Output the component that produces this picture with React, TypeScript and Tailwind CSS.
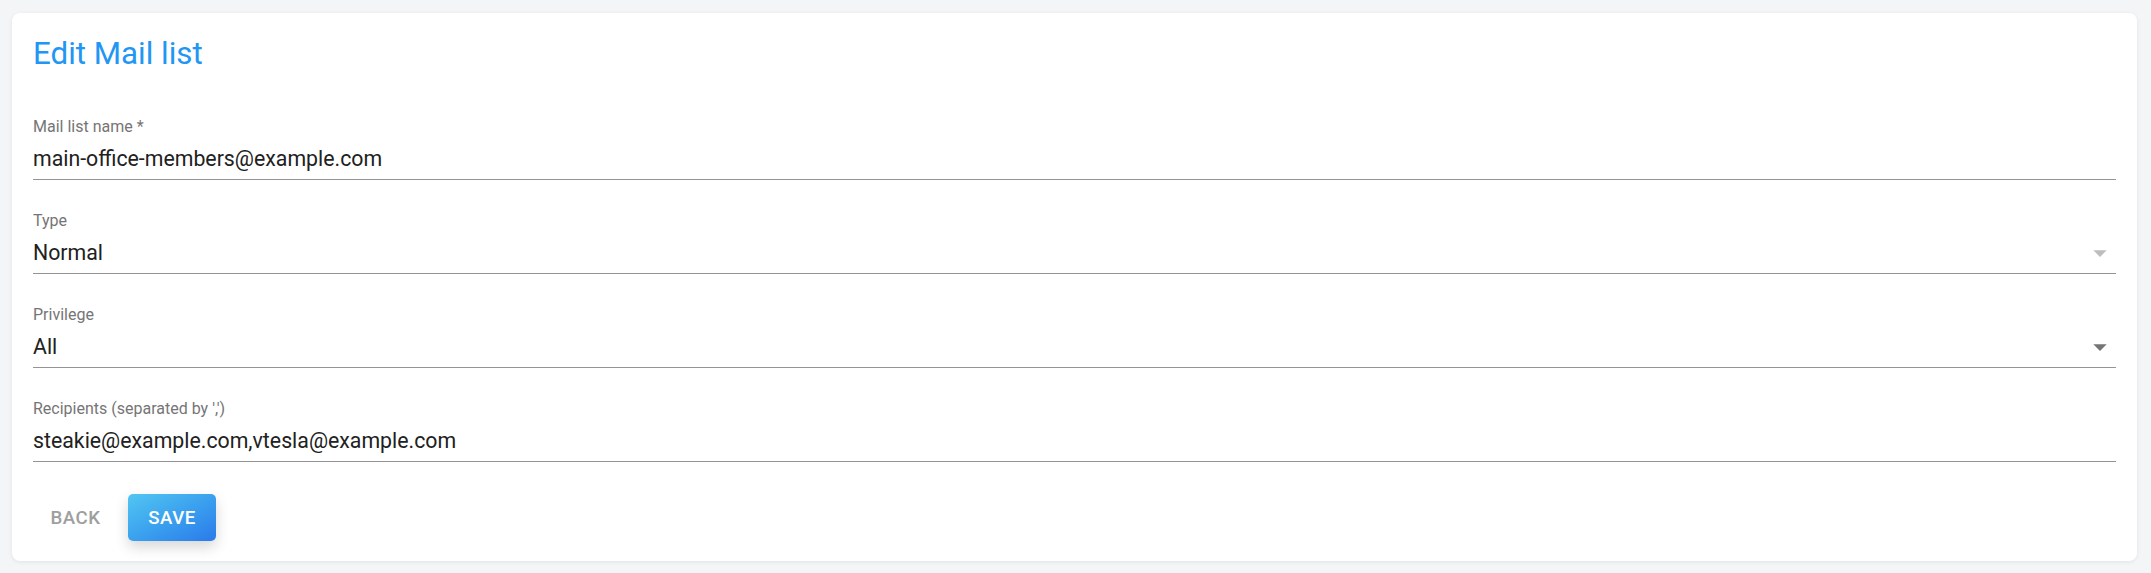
import React from 'react';

const ArrowDrop: React.FC<{ color: string }> = ({ color }) => (
  <svg viewBox="0 0 24 24" className="w-[32px] h-[32px] shrink-0" fill={color}>
    <path d="M7 10l5 5 5-5z" />
  </svg>
);

type FieldProps = {
  label: string;
  value: string;
  select?: boolean;
  disabled?: boolean;
};

const Field: React.FC<FieldProps> = ({ label, value, select, disabled }) => (
  <div className="flex flex-col">
    <label className="text-[16px] leading-[19px] text-[#757575]">{label}</label>
    <div className="mt-[10px] pb-[8px] border-b border-[#949494] flex items-center justify-between">
      <span className="text-[21.3px] leading-[25px] text-[#212121]">{value}</span>
      {select && (
        <div className="h-[25px] flex items-center">
          <ArrowDrop color={disabled ? '#bdbdbd' : '#757575'} />
        </div>
      )}
    </div>
  </div>
);

const App: React.FC = () => {
  const fields: FieldProps[] = [
    { label: 'Mail list name *', value: 'main-office-members@example.com' },
    { label: 'Type', value: 'Normal', select: true, disabled: true },
    { label: 'Privilege', value: 'All', select: true },
    { label: "Recipients (separated by ',')", value: 'steakie@example.com,vtesla@example.com' }
  ];

  return (
    <div className="h-[573px] w-full bg-[#f4f5f6] pt-[13px] pl-[12px] pr-[14px] overflow-hidden" style={{ fontFamily: 'Roboto, "Noto Sans", sans-serif' }}>
      <div className="h-[548px] bg-white rounded-lg shadow-[0_1px_4px_rgba(0,0,0,0.08)] pt-[22px] px-[21px]">
        <h1 className="text-[31.3px] leading-[38px] font-normal text-[#2196f3]">Edit Mail list</h1>

        <div className="mt-[44px] flex flex-col gap-[31px]">
          {fields.map((f, idx) => (
            <Field key={idx} {...f} />
          ))}
        </div>

        <div className="mt-[32px] flex items-center gap-[10px]">
          <button className="h-[47px] min-w-[85px] px-[11px] rounded text-[18.67px] font-medium uppercase tracking-[0.5px] text-[#9e9e9e]">
            Back
          </button>
          <button className="h-[47px] w-[88px] rounded-[5px] bg-linear-to-br from-[#52c6f2] to-[#2b7ae9] text-[18.67px] font-medium uppercase tracking-[0.5px] text-white shadow-[0_6px_14px_rgba(0,0,0,0.16)]">
            Save
          </button>
        </div>
      </div>
    </div>
  );
};

export default App;
